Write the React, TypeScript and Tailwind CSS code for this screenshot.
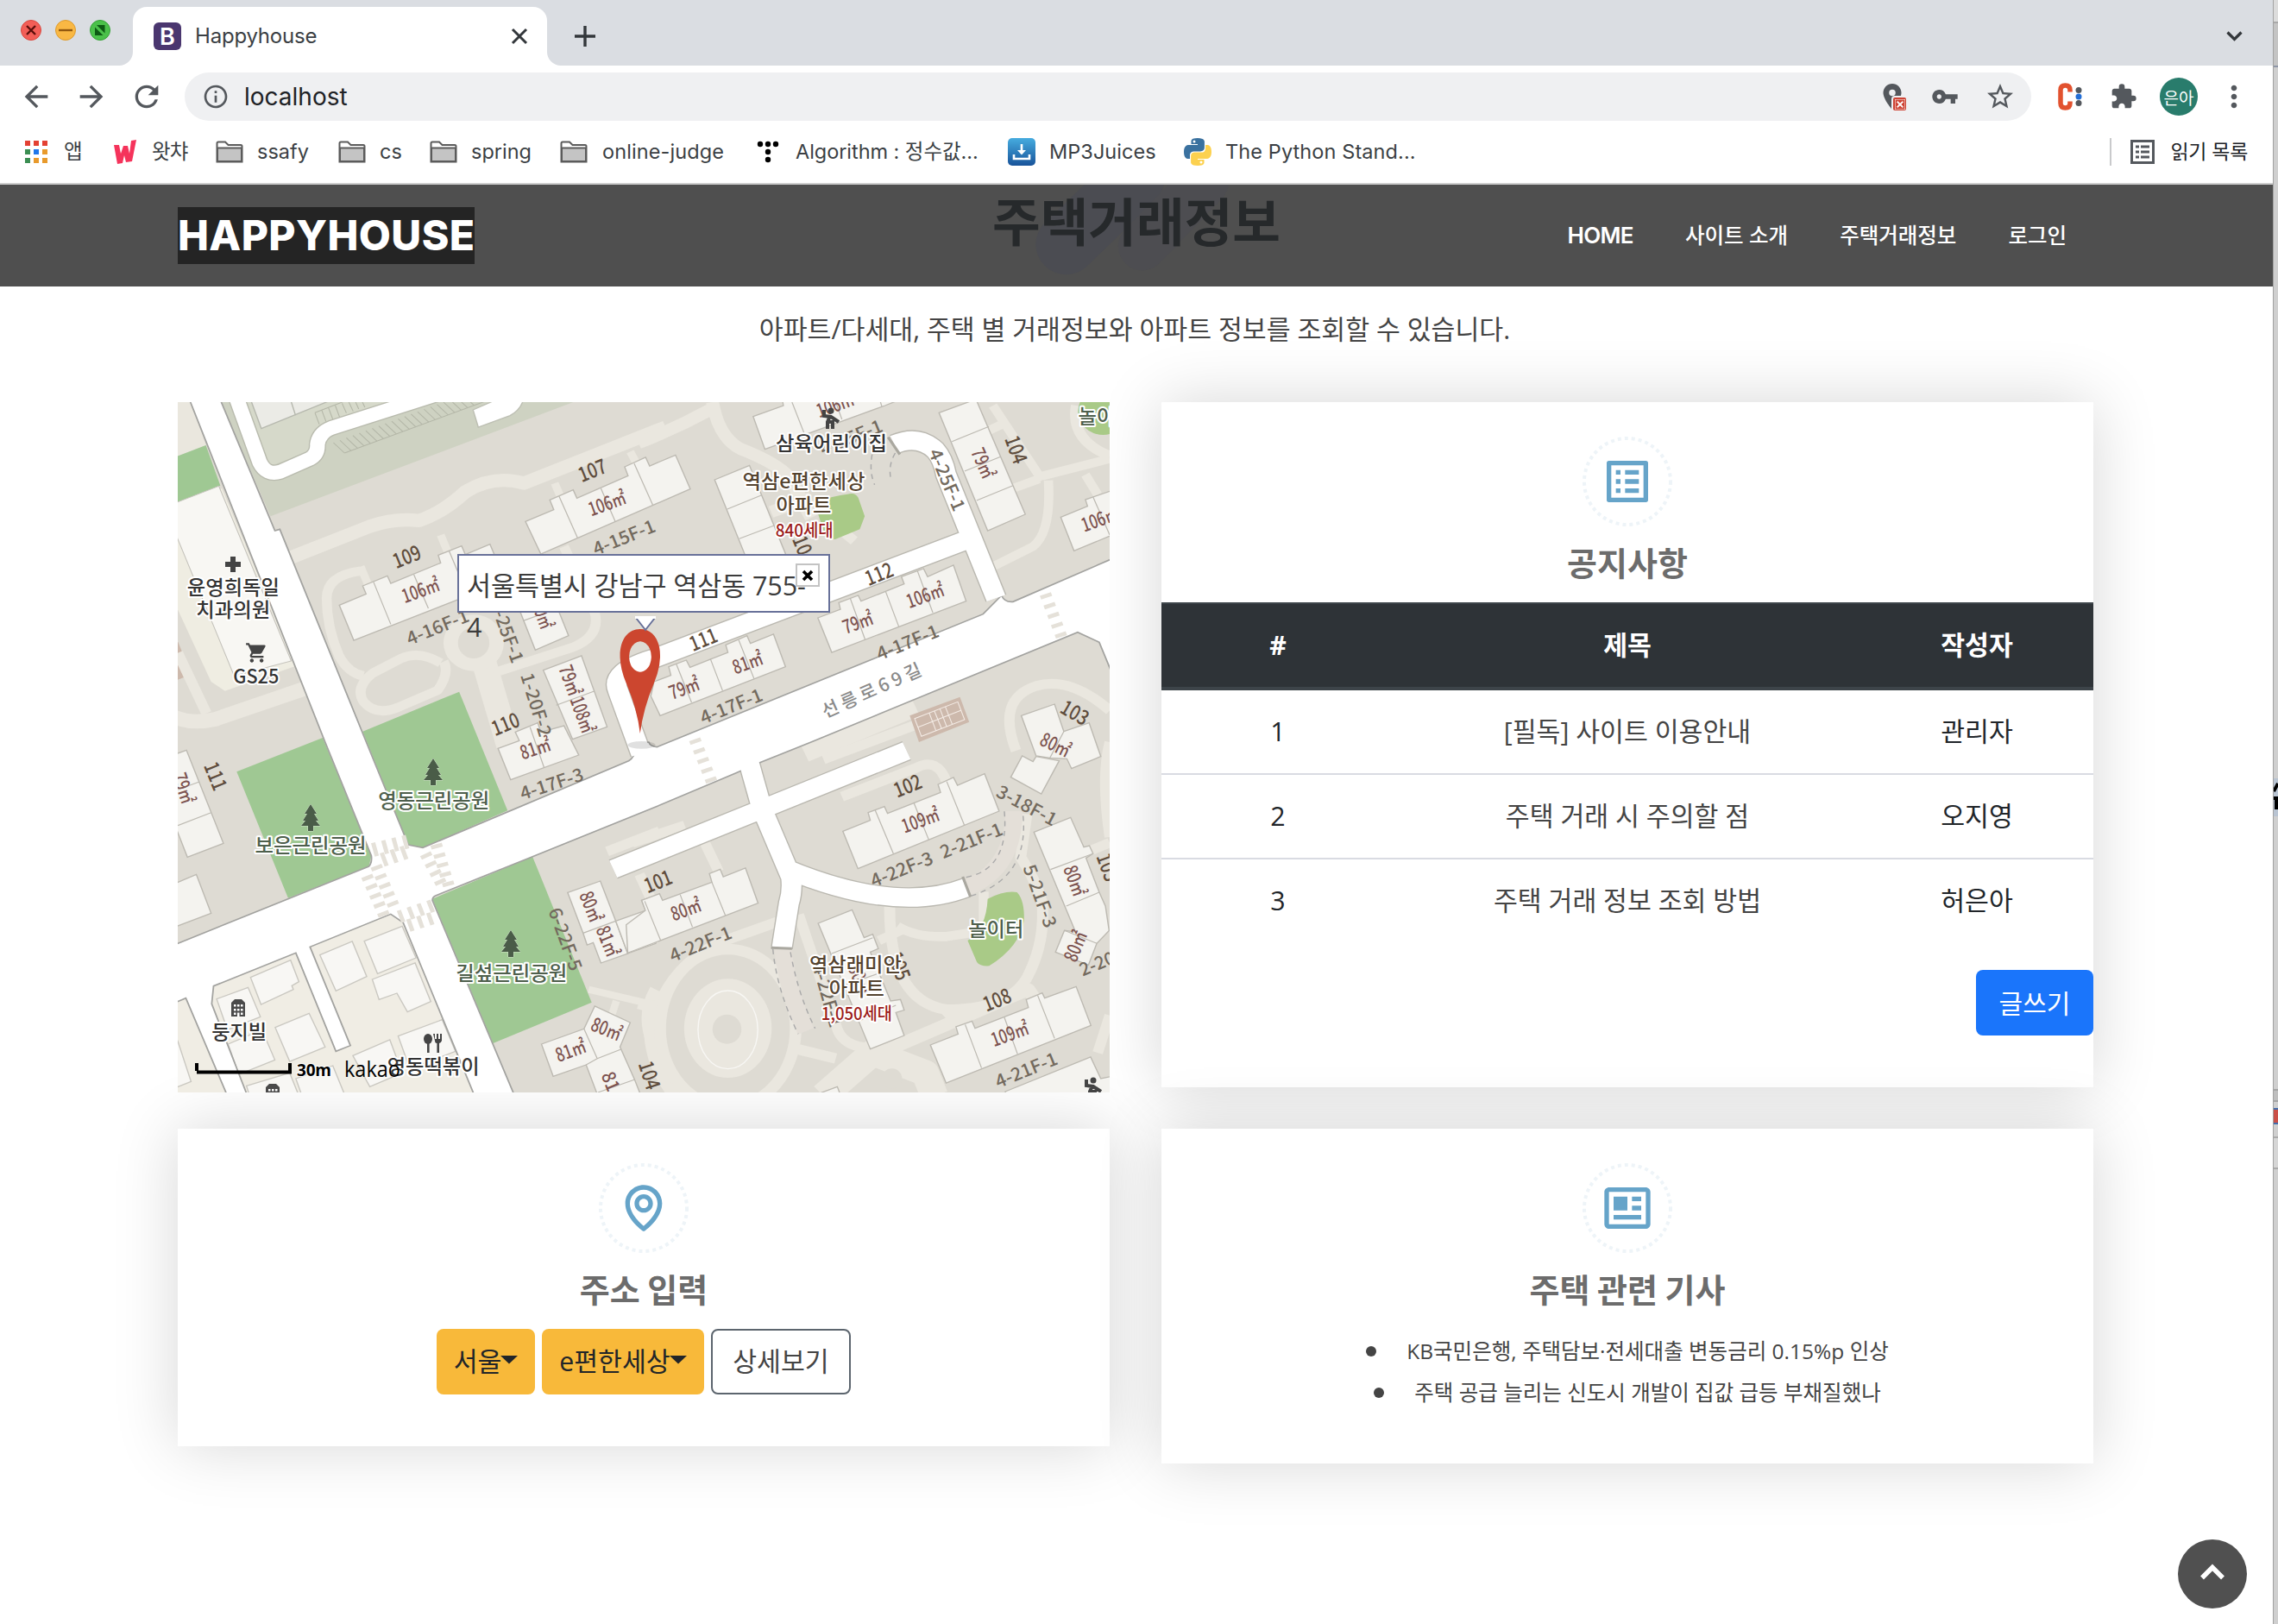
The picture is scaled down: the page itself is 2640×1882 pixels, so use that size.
import React from "react";
import {
  MdArrowBack,
  MdArrowForward,
  MdRefresh,
  MdInfoOutline,
  MdVpnKey,
  MdStarBorder,
  MdExtension,
  MdMoreVert,
  MdLocationOn,
  MdShoppingCart,
  MdClose,
} from "react-icons/md";
import { BiMap, BiNews } from "react-icons/bi";

/* ---------- Browser chrome ---------- */

function TrafficLights() {
  return (
    <svg className="absolute left-6 top-[23px]" width="104" height="24" viewBox="0 0 104 24">
      <circle cx="12" cy="12" r="11.5" fill="#f25e57" stroke="#d9483f" />
      <path d="M7 7l10 10M17 7L7 17" stroke="#5c0f0b" strokeWidth="2.4" />
      <circle cx="52" cy="12" r="11.5" fill="#f9b844" stroke="#dc9b2f" />
      <path d="M44 12h16" stroke="#93590f" strokeWidth="2.4" />
      <circle cx="92" cy="12" r="11.5" fill="#4bc14a" stroke="#36a137" />
      <path d="M88 6h9.500v9.500zM86 8.500v9.500h9.500z" fill="#0d5a14" />
    </svg>
  );
}

function TabStrip() {
  return (
    <div className="relative flex h-[76px] shrink-0 bg-[#dadde2]">
      <TrafficLights />
      <div className="relative ml-[154px] mt-2 flex h-[68px] w-[480px] items-center rounded-t-2xl bg-white pl-6 pr-[22px]">
        <svg className="absolute -left-4 bottom-0" width="16" height="16"><path d="M16 0V16H0A16 16 0 0 0 16 0" fill="#fff" /></svg>
        <svg className="absolute -right-4 bottom-0" width="16" height="16"><path d="M0 0V16H16A16 16 0 0 1 0 0" fill="#fff" /></svg>
        <span className="flex size-8 items-center justify-center rounded-md bg-[#4a366f] font-['Inter'] text-[27px] font-semibold leading-none text-white">B</span>
        <span className="ml-4 flex-1 font-['Inter'] text-2xl leading-none tracking-[-0.2px] text-[#3b3f44]">Happyhouse</span>
        <svg width="20" height="20" viewBox="0 0 20 20"><path d="M2 2l16 16M18 2L2 18" stroke="#33373b" strokeWidth="3" /></svg>
      </div>
      <svg className="ml-8 mt-[30px]" width="24" height="24"><path d="M12 0v24M0 12h24" stroke="#33373b" strokeWidth="3.4" /></svg>
      <svg className="ml-auto mr-[35px] mt-9" width="19" height="13"><path d="M1.500 1.500l8 8 8-8" fill="none" stroke="#33373b" strokeWidth="3.200" /></svg>
    </div>
  );
}

function Toolbar() {
  return (
    <div className="flex h-[72px] shrink-0 items-center bg-white pl-[22px] text-[#54585d]">
      <MdArrowBack className="size-10" />
      <MdArrowForward className="ml-6 size-10" />
      <MdRefresh className="ml-6 size-10" />
      <div className="ml-6 flex h-14 w-[2140px] items-center rounded-full bg-[#eff0f2] pl-5">
        <MdInfoOutline className="size-8" />
        <span className="ml-[17px] flex-1 font-['Inter'] text-[28px] leading-none text-[#202226]">localhost</span>
        <span className="relative mr-[27px] flex">
          <MdLocationOn className="size-9" />
          <span className="absolute left-[19px] top-[19px] flex size-[15px] items-center justify-center rounded-[2px] bg-[#ce4435] text-white ring-2 ring-[#eff0f2]">
            <MdClose className="size-3 stroke-white stroke-2" />
          </span>
        </span>
        <MdVpnKey className="mr-[30px] size-8" />
        <MdStarBorder className="mr-[18px] size-9" />
      </div>
      <svg className="ml-[30px]" width="30" height="32" viewBox="0 0 30 32">
        <path d="M15 10.500V8.500Q15 3 9.500 3T4 8.500V23.500Q4 29 9.500 29T15 23.500V21.500" fill="none" stroke="#e2522f" strokeWidth="5.500" />
        <circle cx="25" cy="8.500" r="3.500" fill="#54585d" />
        <circle cx="25" cy="16" r="3.500" fill="#246fd6" />
        <circle cx="25" cy="23.500" r="3.500" fill="#54585d" />
      </svg>
      <MdExtension className="ml-[31px] size-8" />
      <span className="ml-[26px] flex size-11 items-center justify-center rounded-full bg-[#297c6c] font-['Noto_Sans_CJK_KR'] text-[19px] leading-none text-white">은아</span>
      <MdMoreVert className="ml-[22px] size-10" />
    </div>
  );
}

const folder = (
  <svg width="32" height="26" viewBox="0 0 32 26">
    <path d="M1.500 24.500V3Q1.500 1.500 3 1.500h8l3.500 3.500H29q1.500 0 1.500 1.500v18z" fill="#fff" stroke="#5b5b5b" strokeWidth="2" />
    <path d="M2 8.500h28V24H2z" fill="#c4c4c4" stroke="#5b5b5b" strokeWidth="2" />
  </svg>
);

const appsIcon = (
  <svg width="26" height="26" viewBox="0 0 26 26">
    <path d="M0 0h6v6H0zM10 0h6v6h-6zM20 0h6v6h-6z" fill="#e34133" />
    <path d="M0 10h6v6H0zM0 20h6v6H0z" fill="#3b8e52" />
    <path d="M10 10h6v6h-6z" fill="#1f77ea" />
    <path d="M20 10h6v6h-6zM10 20h6v6h-6zM20 20h6v6h-6z" fill="#e89a2c" />
  </svg>
);

const watchaIcon = (
  <svg width="26" height="28" viewBox="0 0 26 28">
    <path d="M0 6H6L8 16L11 7H16L18 16L20 1L26 0L21 25L14 26L12 18L10 27L4 28Z" fill="#f5335b" />
  </svg>
);

const dotsIcon = (
  <svg width="26" height="26" viewBox="0 0 26 26">
    {[[4, 4], [13, 4], [22, 4], [13, 13], [13, 22]].map(([x, y]) => (
      <circle key={`${x}-${y}`} cx={x} cy={y} r="3.200" />
    ))}
  </svg>
);

const mp3Icon = (
  <svg width="32" height="32" viewBox="0 0 32 32">
    <defs>
      <linearGradient id="mp3" x1="0" y1="0" x2="0" y2="1">
        <stop offset="0" stopColor="#46acdf" />
        <stop offset="1" stopColor="#18539a" />
      </linearGradient>
    </defs>
    <rect width="32" height="32" rx="5" fill="url(#mp3)" />
    <path d="M16 7v10M7 19v5h18v-5" fill="none" stroke="#fff" strokeWidth="2.600" />
    <path d="M11 14h10l-5 5.500z" fill="#fff" />
  </svg>
);

const pythonIcon = (
  <svg width="32" height="32" viewBox="0 0 32 32">
    <path d="M15.900 0C8 0 8.500 3.500 8.500 3.500V7H16v1H5.300S0 7.500 0 16s4.600 8 4.600 8H7v-4s-.2-4.600 4.500-4.600h8s4.400 0 4.400-4.300V4.300S24.600 0 15.900 0z" fill="#3a719f" />
    <path d="M16.100 32c7.900 0 7.400-3.500 7.400-3.500V25H16v-1h10.700s5.300.5 5.300-8-4.600-8-4.600-8H25v4s.2 4.600-4.500 4.600h-8s-4.400 0-4.400 4.300v6.800S7.400 32 16.100 32z" fill="#fcd14f" />
    <circle cx="12" cy="4" r="1.500" fill="#fff" />
    <circle cx="20" cy="28" r="1.500" fill="#fff" />
  </svg>
);

const bookmarks: { icon: React.ReactNode; label: string; cell: string; gap: string; text: string }[] = [
  { icon: appsIcon, label: "앱", cell: "w-[103px]", gap: "ml-[19px]", text: "tracking-[-1px]" },
  { icon: watchaIcon, label: "왓챠", cell: "w-[118px]", gap: "ml-[18px]", text: "tracking-[-0.8px]" },
  { icon: folder, label: "ssafy", cell: "w-[142px]", gap: "ml-4", text: "" },
  { icon: folder, label: "cs", cell: "w-[106px]", gap: "ml-4", text: "" },
  { icon: folder, label: "spring", cell: "w-[151px]", gap: "ml-4", text: "" },
  { icon: folder, label: "online-judge", cell: "w-[228px]", gap: "ml-[17px]", text: "tracking-[0.1px]" },
  { icon: dotsIcon, label: "Algorithm : 정수값...", cell: "w-[291px]", gap: "ml-[19px]", text: "tracking-[-0.05px]" },
  { icon: mp3Icon, label: "MP3Juices", cell: "w-[204px]", gap: "ml-4", text: "tracking-[0.05px]" },
  { icon: pythonIcon, label: "The Python Stand...", cell: "w-[300px]", gap: "ml-4", text: "tracking-[0.1px]" },
];

function BookmarkBar() {
  return (
    <div className="flex h-[66px] shrink-0 items-start border-b-2 border-[#cfcfcf] bg-white pl-[29px] font-['Inter','Noto_Sans_CJK_KR'] text-[23.500px] leading-none text-[#3b3f44]">
      {bookmarks.map((b) => (
        <div key={b.label} className={`flex h-[56px] shrink-0 items-center whitespace-nowrap ${b.cell}`}>
          {b.icon}
          <span className={`${b.gap} ${b.text}`}>{b.label}</span>
        </div>
      ))}
      <div className="ml-auto mr-[29px] flex h-[56px] items-center whitespace-nowrap text-[#202226]">
        <span className="h-8 w-0.5 bg-[#c9cacc]" />
        <svg className="ml-[22px]" width="28" height="28" viewBox="0 0 28 28">
          <rect x="1.500" y="1.500" width="25" height="25" fill="none" stroke="#54585d" strokeWidth="3" />
          <path d="M6 8h4M6 14h4M6 20h4M12 8h10M12 14h10M12 20h10" stroke="#54585d" strokeWidth="2.800" />
        </svg>
        <span className="ml-[18px] text-[23px] tracking-[-0.3px]">읽기 목록</span>
      </div>
    </div>
  );
}

/* ---------- Map ---------- */

type Pts = string;
type Tile = { x: number; y: number; buildings: Pts[]; dividers: string; houses?: Pts[]; paths: [string, number][] };

const tiles: Tile[] = [
  {
    x: 0,
    y: 0,
    buildings: [
      "541,724 628,685 617,657 697,622 708,648 870,577 862,550 938,518 950,548 1030,512 1080,640 588,846",
      "1145,433 1237,392 1224,358 1300,323 1312,352 1478,274 1467,243 1535,210 1548,240 1632,202 1680,320 1195,546",
      "1115,712 1225,670 1285,830 1177,880",
      "1203,950 1327,900 1410,1147 1298,1190",
      "1056,1222 1125,1195 1112,1165 1185,1133 1195,1165 1270,1143 1318,1245 1097,1331",
    ],
    dividers:
      "M652,643L708,790M783,618L830,735M897,535L950,670M1254,345L1314,490M1390,318L1436,432M1498,232L1558,375M1138,778L1250,735M1245,1072L1368,1023M1160,1148L1206,1290",
    paths: [
      ["M380,560L640,450Q720,420 800,430Q880,400 950,330Q1040,270 1140,300L1600,105", 46],
      ["M610,605Q500,620 500,700Q500,800 540,900Q570,960 620,970", 32],
      ["M870,480L905,570M610,590L645,680M1240,300L1260,350M1485,190L1510,240", 26],
      ["M870,925Q800,880 740,910L650,960Q590,1010 620,1060Q660,1110 730,1080L860,1020Q900,960 880,920", 32],
      ["M1010,920L1090,1210", 80],
      ["M1040,960L1300,870Q1390,830 1370,750L1270,520", 32],
      ["M0,1110Q60,1140 140,1120L440,1010", 50],
      ["M17,890L110,1100", 34],
    ],
  },
  {
    x: 1512,
    y: 0,
    buildings: [
      "372,68 470,30 465,0 870,0 800,30 410,182",
      "247,288 360,238 478,548 345,548",
      "975,55 1095,8 1255,408 1133,465",
      "1370,418 1457,380 1450,357 1529,328 1560,315 1560,470 1413,535",
      "582,768 655,738 650,715 713,690 722,710 862,650 853,625 925,597 938,625 1022,585 1063,710 627,888",
      "50,990 105,968 98,938 155,915 167,940 290,888 283,862 352,830 363,857 438,825 477,938 70,1108 40,1040",
      "1242,1108 1350,1068 1380,1163 1462,1133 1500,1250 1405,1292 1390,1258 1335,1255 1290,1248",
    ],
    dividers:
      "M498,18L537,125M640,18L660,78M780,0L790,35M288,390L398,342M327,493L440,447M1017,155L1137,103M1058,258L1175,208M1097,360L1215,308M1475,348L1529,480M687,700L735,843M802,677L845,800M905,605L955,750M123,930L172,1062M233,910L273,1022M325,845L375,980M1380,1163L1335,1255",
    paths: [
      ["M0,160Q120,110 240,40M240,18Q260,140 330,180Q450,230 490,280L560,420M430,400L560,350", 42],
      ["M1150,30L1310,290M1310,275L1529,215M1330,290Q1340,470 1280,520L1150,590M1210,320L1300,285M1130,120L1190,90M1450,270L1490,340", 30],
      ["M1420,30Q1400,150 1529,205", 34],
      ["M1225,1230Q1160,1050 1290,1005Q1400,970 1529,1090M620,430L700,500", 34],
      ["M540,1240L900,1080", 60],
    ],
  },
  {
    x: 0,
    y: 1200,
    buildings: [
      "1282,523 1388,483 1438,622 1477,735 1390,768 1365,697 1345,705 1332,664",
      "1438,622 1535,585 1522,550 1568,533 1568,700 1477,735",
      "-10,50 45,28 165,352 48,400 -10,240",
      "-10,500 77,460 125,595 -10,650",
      "1197,1050 1335,997 1370,918 1485,975 1452,1060 1500,1175 1520,1230 1380,1230 1342,1122 1235,1162",
    ],
    dividers:
      "M1332,664L1438,622M17,165L87,138M17,290L125,245M1335,997L1378,1100L1455,1068M1342,1122L1378,1100M1380,1218L1500,1173",
    houses: [
      "253,818 383,758 410,833 387,847 392,860 287,912",
      "478,740 583,693 630,815 530,865",
      "622,692 745,640 790,750 665,805",
      "648,825 787,768 838,902 762,938 728,873 670,895",
      "143,893 245,853 285,955 178,1000",
      "333,992 443,943 495,1060 380,1110",
      "180,1050 290,1000 332,1105 215,1155",
      "585,1090 705,1035 745,1150 640,1198",
      "732,1022 875,965 918,1075 770,1135",
      "240,1195 380,1150 410,1230 250,1230",
      "400,1170 520,1125 560,1230 420,1230",
      "-10,980 17,1040 60,1180 -10,1210",
    ],
    paths: [
      ["M1350,860L1568,915M1440,900L1425,950", 24],
      ["M1560,1050Q1520,950 1568,860", 40],
      ["M1410,380L1580,310M1515,460L1550,540", 34],
    ],
  },
  {
    x: 1512,
    y: 1200,
    buildings: [
      "-40,635 22,585 10,550 68,527 78,550 238,487 230,457 265,442 275,468 347,438 388,560 -35,733",
      "1208,122 1245,48 1280,68 1290,50 1365,65 1307,180",
      "663,310 752,272 745,245 798,224 808,248 980,175 972,147 1022,123 1035,150 1123,110 1170,240 712,440",
      "1283,313 1402,262 1445,365 1463,360 1475,388 1452,403 1495,522 1515,570 1527,655 1487,700 1460,775 1353,730 1382,655 1418,660",
      "583,630 693,583 732,680 760,668 778,718 752,730 818,900 850,895 862,932 835,940 862,1020 752,1067",
      "947,1053 1037,1015 1030,990 1082,970 1092,995 1265,923 1258,895 1310,872 1318,890 1420,850 1468,985 998,1185",
      "1190,1215 1467,1095 1500,1170 1545,1160 1545,1240 1200,1240",
      "540,1240 645,1198 660,1240",
    ],
    dividers:
      "M20,553L72,690M135,530L175,643M238,487L282,603M768,237L827,388M893,210L942,340M1000,137L1057,288M1337,443L1475,388M1388,570L1495,522M1382,655L1487,700M627,735L760,680M670,845L790,800M715,970L835,915M1060,982L1113,1133M1187,957L1230,1085M1295,880L1350,1030",
    paths: [
      ["M60,930Q120,760 280,690L450,625M0,910L130,950M430,1045L640,1100", 36],
      ["M50,900Q10,1080 120,1230", 44],
      ["M520,600L640,980Q660,1080 800,1060", 34],
      ["M815,560Q810,900 1000,930Q1200,930 1260,820Q1320,700 1310,560Q1290,480 1240,400L1260,250", 36],
      ["M840,640Q900,680 1000,676L1120,656L1120,520M780,690L860,650", 32],
      ["M700,1120L1265,860L1290,900M1000,930L1070,1010", 44],
      ["M1529,0Q1500,120 1529,330M1460,380L1529,350M1529,950L1490,1080", 34],
      ["M600,60L900,-60M660,190L900,90Q970,50 1000,140M215,350L260,450M-20,350L150,290", 34],
      ["M600,1230L760,1080L930,1150L960,1230", 90],
    ],
  },
];

const roadArea =
  "M55,10L495,1200L645,1595Q648,1620 637,1632L5,1905L5,2107L43,2090L178,2430L243,2430L127,2110L133,2048L400,1933L530,2275L577,2255L446,1912L708,1798L748,1827L980,2430L1110,2430L843,1750Q843,1738 855,1733L1168,1598L1568,1425L1827,1308L1897,1275L2072,1200L2937,818L3007,853L3050,965L3050,562L2727,712Q2700,715 2690,690L2630,755L1572,1217Q1550,1215 1545,1200L1500,1210Q1505,1250 1480,1265L812,1567L765,1557L640,1230L348,460L332,465L155,10Z";

const lanes =
  "M2342,165Q2420,130 2475,185Q2500,215 2510,270L2672,700M2570,500L1560,910Q1420,955 1445,1020L1520,1240M1430,1642L2382,1230M1870,1270L1912,1430L2007,1670Q2012,1720 2000,1760L1977,1915M1990,1640Q2350,1800 2577,1705";

const curvedDrive =
  "M208,5L283,228Q305,275 350,260L445,215Q472,200 470,165Q475,125 515,108L860,-10";

const halo = "[paint-order:stroke] stroke-white stroke-[4px] [stroke-linejoin:round]";

type Label = [text: string, x: number, y: number, rotate: number, size: number, fill: string, width?: number];

const numberColor = "#5f4d3d";
const areaColor = "#7d5350";
const floorColor = "#736a5e";

const labels: Label[] = [
  ["107", 1362, 255, -22, 24, numberColor, 33],
  ["109", 760, 555, -22, 24, numberColor, 33],
  ["110", 1080, 1137, -22, 24, numberColor, 33],
  ["111", 1722, 843, -22, 24, numberColor, 33],
  ["112", 2292, 615, -22, 24, numberColor, 33],
  ["104", 2738, 183, 70, 24, numberColor, 33],
  ["10", 2044, 515, 68, 24, numberColor, 22],
  ["103", 2928, 1097, 30, 24, numberColor, 33],
  ["111", 140, 1318, 68, 24, numberColor, 33],
  ["101", 1575, 1684, -22, 24, numberColor, 33],
  ["102", 2385, 1352, -22, 24, numberColor, 33],
  ["108", 2675, 2096, -22, 24, numberColor, 33],
  ["104", 1548, 2358, 72, 24, numberColor, 33],
  ["105", 2358, 1978, 70, 24, numberColor, 33],
  ["103", 3035, 1635, 70, 24, numberColor, 33],
  ["106㎡", 1410, 370, -20, 22, areaColor, 45],
  ["106㎡", 805, 672, -20, 22, areaColor, 45],
  ["106㎡", 2150, 28, -20, 22, areaColor, 45],
  ["79㎡", 2630, 230, 66, 22, areaColor, 36],
  ["106㎡", 3010, 425, -20, 22, areaColor, 45],
  ["106㎡", 2442, 690, -20, 22, areaColor, 45],
  ["79㎡", 2224, 784, -20, 22, areaColor, 36],
  ["81㎡", 1866, 924, -20, 22, areaColor, 36],
  ["79㎡", 1660, 1012, -20, 22, areaColor, 36],
  ["79㎡", 1290, 985, 70, 22, areaColor, 36],
  ["108㎡", 1330, 1105, 70, 22, areaColor, 43],
  ["0㎡", 1205, 770, 70, 22, areaColor, 24],
  ["81㎡", 1177, 1222, -18, 22, areaColor, 36],
  ["80㎡", 2865, 1210, 26, 22, areaColor, 36],
  ["79㎡", 36, 1360, 72, 22, areaColor, 36],
  ["80㎡", 1358, 1772, 68, 22, areaColor, 36],
  ["81㎡", 1412, 1892, 68, 22, areaColor, 36],
  ["80㎡", 1666, 1782, -20, 22, areaColor, 36],
  ["109㎡", 2427, 1472, -20, 22, areaColor, 45],
  ["80㎡", 2928, 1682, 70, 22, areaColor, 36],
  ["80㎡", 2930, 1910, -68, 22, areaColor, 36],
  ["80㎡", 1408, 2198, 22, 22, areaColor, 36],
  ["81㎡", 1292, 2272, -20, 22, areaColor, 36],
  ["81", 1422, 2380, 68, 22, areaColor, 22],
  ["109㎡", 2717, 2214, -20, 22, areaColor, 45],
  ["80㎡", 2230, 2025, 68, 22, areaColor, 36],
  ["4-15F-1", 1465, 488, -22, 21, floorColor, 76],
  ["4-16F-1", 860, 800, -22, 21, floorColor, 76],
  ["1-25F-1", 1085, 815, 70, 21, floorColor, 76],
  ["1-20F-2", 1180, 1070, 73, 21, floorColor, 76],
  ["4-15F-1", 2202, 140, -22, 21, floorColor, 76],
  ["4-25F-1", 2513, 288, 67, 21, floorColor, 76],
  ["4-17F-1", 2385, 853, -22, 21, floorColor, 76],
  ["4-17F-1", 1813, 1075, -22, 21, floorColor, 76],
  ["4-17F-3", 1230, 1345, -18, 21, floorColor, 76],
  ["6-22F-5", 1275, 1885, 70, 21, floorColor, 76],
  ["4-22F-1", 1713, 1902, -22, 21, floorColor, 76],
  ["4-22F-3", 2366, 1642, -22, 21, floorColor, 76],
  ["2-21F-1", 2592, 1542, -22, 21, floorColor, 76],
  ["3-18F-1", 2772, 1420, 28, 21, floorColor, 76],
  ["5-21F-3", 2815, 1735, 70, 21, floorColor, 76],
  ["2-20", 3000, 1970, -22, 21, floorColor, 42],
  ["4-22F-1", 2125, 2080, 74, 21, floorColor, 76],
  ["4-21F-1", 2770, 2340, -22, 21, floorColor, 76],
];

const places: Label[] = [
  ["윤영희독일", 197, 663, 0, 23, "#333", 107],
  ["치과의원", 197, 740, 0, 23, "#333", 86],
  ["GS25", 271, 972, 0, 23, "#333", 53],
  ["삼육어린이집", 2138, 160, 0, 23, "#333", 129],
  ["역삼e편한세상", 2048, 293, 0, 23, "#54432f", 142],
  ["아파트", 2048, 377, 0, 23, "#54432f", 64],
  ["840세대", 2050, 465, 0, 20, "#9c1c1a", 67],
  ["놀이터", 3028, 68, 0, 23, "#4e5f4c", 64],
  ["영동근린공원", 848, 1402, 0, 23, "#4e5f4c", 129],
  ["보은근린공원", 448, 1560, 0, 23, "#4e5f4c", 129],
  ["길섶근린공원", 1100, 2002, 0, 23, "#4e5f4c", 129],
  ["둥지빌", 216, 2208, 0, 23, "#333", 64],
  ["영동떡볶이", 846, 2328, 0, 23, "#333", 107],
  ["역삼래미안", 2216, 1972, 0, 23, "#54432f", 107],
  ["아파트", 2220, 2058, 0, 23, "#54432f", 64],
  ["1,050세대", 2220, 2145, 0, 20, "#9c1c1a", 82],
  ["놀이터", 2672, 1850, 0, 23, "#4e5f4c", 64],
];

function MapLabel({ label, outlined }: { label: Label; outlined?: boolean }) {
  const [text, x, y, rotate, size, fill, width] = label;
  return (
    <text
      transform={`translate(${x / 2.8 - 6} ${y / 3 - 6}) rotate(${rotate})`}
      textAnchor="middle"
      dy="0.36em"
      fontSize={size}
      fill={fill}
      textLength={width}
      lengthAdjust="spacingAndGlyphs"
      className={outlined ? `font-medium ${halo}` : "font-medium"}
    >
      {text}
    </text>
  );
}

function Tree({ x, y }: { x: number; y: number }) {
  return (
    <path
      transform={`translate(${x} ${y})`}
      d="M11 0l7 11h-3l5 8h-3l5 6H14v6H8v-6H0l5-6H2l5-8H4z"
      fill="#4a5c48"
      stroke="#d4e6cd"
      strokeWidth="1"
      className="[paint-order:stroke]"
    />
  );
}

function ChildIcon({ x, y }: { x: number; y: number }) {
  return (
    <g transform={`translate(${x} ${y})`} fill="none" stroke="#444" strokeWidth="4">
      <circle cx="11" cy="4" r="3.500" fill="#444" stroke="none" />
      <path d="M3 3v7l8 1 9 6M10 10l-3 7v8M9 17h4v8" />
    </g>
  );
}

function BuildingIcon({ x, y }: { x: number; y: number }) {
  return (
    <g transform={`translate(${x} ${y})`}>
      <path d="M0 20V4L4 0h8l4 4v16z" fill="#4a4a4a" />
      <path d="M3 6h2.500v2.500H3zM7 6h2.500v2.500H7zM11 6h2.500v2.500H11zM3 11h2.500v2.500H3zM7 11h2.500v2.500H7zM11 11h2.500v2.500H11zM3 15.500h2.500V18H3zM11 15.500h2.500V18H11zM7 15.500h2.500V20H7z" fill="#fff" />
    </g>
  );
}

function KakaoMap() {
  const hatch = Array.from({ length: 21 }, (_, i) => `M${558 + i * 21},${195 - i * 8.3}l-36,-36`).join("");
  return (
    <div className="relative h-[800px] w-[1080px] overflow-hidden">
      <svg width="1080" height="800" viewBox="0 0 1080 800" className="font-['Noto_Sans_CJK_KR',sans-serif]">
        <rect width="1080" height="800" fill="#dedbd3" />
        <g transform="translate(-6 -6) scale(.357143 .333333)">
          <path d="M150,0L1345,0L318,415Z" fill="#ced2c2" />
          <path d="M235,0L315,240L445,190L500,100L830,0Z" fill="#d6d9ca" />
          <path d="M250,0L288,110L540,0M380,0L399,64" fill="#ebebe6" stroke="#b6b8ae" strokeWidth="4" />
          <path d={hatch} stroke="#b3b6a7" strokeWidth="3" />
          <path d="M558,195L1040,5M462,55L560,14M462,55l14,40M484,46l14,40M506,38l14,40M528,30l14,40M550,22l14,34M572,18l14,32M594,18l10,24M616,18l8,18" fill="none" stroke="#b3b6a7" strokeWidth="3" />
          <path d="M975,45L992,105L1095,65Q1130,45 1140,5L1060,5Z" fill="#fff" stroke="#bdbfb3" strokeWidth="4" />
          <path d="M0,0H55L108,168L0,212Z" fill="#eae7de" />
          <path d="M0,212L108,168L155,308L0,372Z" fill="#9fc893" />
          <path d="M0,390L160,318L400,935L170,1022L125,990L0,700Z" fill="#efede2" />
          <path d="M0,372L150,310L385,918L200,970L0,450Z" fill="#f8f7f3" stroke="#c4c2bb" strokeWidth="3" />
          <path d="M0,830L17,850L60,965L0,990Z" fill="#cdb9ac" />
          <path d="M0,2100L133,2048L708,1798L748,1827L990,2430H0Z" fill="#f0ede4" />
          {tiles.map((t) => (
            <g key={`${t.x}-${t.y}-paths`} transform={`translate(${t.x} ${t.y})`} fill="none" stroke="#eae7df">
              {t.paths.map(([d, w]) => (
                <path key={d} d={d} strokeWidth={w} strokeLinejoin="round" />
              ))}
            </g>
          ))}
          <circle cx="977" cy="855" r="98" fill="#eae7df" />
          <ellipse cx="977" cy="855" rx="51" ry="54" fill="#dedbd3" />
          <ellipse cx="1802" cy="2195" rx="220" ry="275" fill="#dedbd3" stroke="#eae7df" strokeWidth="38" />
          <ellipse cx="1802" cy="2195" rx="142" ry="172" fill="#eae7df" />
          <ellipse cx="1802" cy="2200" rx="97" ry="136" fill="none" stroke="#f8f7f4" strokeWidth="4" />
          <ellipse cx="1799" cy="2198" rx="47" ry="51" fill="#dedbd3" />
          <ellipse cx="2334" cy="2370" rx="33" ry="35" fill="#dedbd3" />
          <path d="M208,1303L487,1185L645,1595L637,1632L375,1742Z" fill="#9fc893" />
          <path d="M617,1163L930,1025L1087,1438L812,1567L765,1557Z" fill="#9fc893" />
          <path d="M843,1745L1168,1598L1360,2105L1040,2247Z" fill="#9fc893" />
          <path d="M2085,375Q2110,350 2190,338Q2215,330 2225,350L2246,415L2230,460L2150,495L2120,490Z" fill="#a9ca87" />
          <circle cx="3020" cy="50" r="82" fill="#a9ca87" />
          <path d="M2645,1745Q2700,1715 2740,1722Q2765,1750 2763,1820Q2750,1910 2650,1978Q2620,1980 2610,1965L2580,1890Q2640,1850 2645,1745Z" fill="#a9ca87" />
          <path d="M2392,1108L2555,1043L2585,1130L2422,1200Z" fill="#cdb9ac" />
          <path d="M2408,1118L2548,1060L2570,1122L2430,1180ZM2419,1148L2558,1090M2455,1098L2477,1160M2472,1092L2495,1152M2490,1084L2512,1146M2508,1078L2530,1138" fill="none" stroke="#f4ece6" strokeWidth="3" />
          {tiles.map((t) => (
            <g key={`${t.x}-${t.y}-buildings`} transform={`translate(${t.x} ${t.y})`} stroke="#bdbab2" strokeWidth="4">
              {t.houses?.map((p) => <polygon key={p} points={p} fill="#f8f7f4" stroke="#cac8c1" />)}
              {t.buildings.map((p) => <polygon key={p} points={p} fill="#f4f3ef" />)}
              <path d={t.dividers} fill="none" strokeWidth="3.500" />
            </g>
          ))}
          <path d={curvedDrive} fill="none" stroke="#b9bbae" strokeWidth="56" />
          <path d={curvedDrive} fill="none" stroke="#fff" strokeWidth="48" />
          <path d="M1980,1920Q2000,2080 2055,2205M2580,1705Q2730,1640 2730,1440" fill="none" stroke="#e4dfd8" strokeWidth="56" />
          <path
            d="M1948,1920Q1960,2060 2030,2215M2005,1930Q2030,2080 2085,2195M2590,1735Q2790,1670 2757,1430M2575,1670Q2720,1640 2698,1430M2270,200Q2260,260 2278,305M2345,195Q2320,240 2332,290"
            fill="none"
            stroke="#a9a9a9"
            strokeWidth="4"
            strokeDasharray="18 16"
          />
          <path d={lanes} fill="none" stroke="#bab8b0" strokeWidth="72" />
          <path d={roadArea} fill="#fff" stroke="#a3a3a0" strokeWidth="5" />
          <path d={lanes} fill="none" stroke="#fff" strokeWidth="64" />
          <path d="M1942,1915L2010,1918M2564,1668L2589,1738M2322,140L2360,200" stroke="#aaa8a0" strokeWidth="9" />
          <g stroke="#e5e1d9" fill="none">
            <path d="M2832,685L2885,835" strokeWidth="38" strokeDasharray="14 22" />
            <path d="M1694,1190L1750,1340" strokeWidth="38" strokeDasharray="14 22" />
            <path d="M820,1588L878,1705" strokeWidth="38" strokeDasharray="14 20" />
            <path d="M855,1555L898,1705" strokeWidth="38" strokeDasharray="14 20" />
            <path d="M630,1665L690,1812" strokeWidth="38" strokeDasharray="14 20" />
            <path d="M660,1630L722,1780" strokeWidth="38" strokeDasharray="14 20" />
            <path d="M650,1575L765,1545" strokeWidth="48" strokeDasharray="14 20" />
            <path d="M680,1610L765,1580" strokeWidth="48" strokeDasharray="14 20" />
            <path d="M735,1808L845,1768" strokeWidth="44" strokeDasharray="14 20" />
            <path d="M765,1838L850,1810" strokeWidth="44" strokeDasharray="14 20" />
          </g>
        </g>
        {labels.map((l, i) => <MapLabel key={i} label={l} />)}
        <text transform="translate(804 334) rotate(-24)" textAnchor="middle" dy="0.36em" fontSize="21" textLength="124" fill="#8a8a8a" className="font-medium">선릉로69길</text>
        <Tree x={285} y={413} />
        <Tree x={143} y={466} />
        <Tree x={375} y={612} />
        <path d="M55 188h18M64 179v18" stroke="#444" strokeWidth="6" />
        <MdShoppingCart x={78} y={277} size={27} color="#444" />
        <ChildIcon x={746} y={6} />
        <ChildIcon x={1050} y={782} />
        <BuildingIcon x={62} y={692} />
        <BuildingIcon x={102} y={790} />
        <g fill="#444">
          <ellipse cx="290" cy="738" rx="5" ry="6" />
          <path d="M289 742h2.600v12H289zM296 732h2v6h2v-6h2v6h2v-6h2v8q-1 3-3 3v11h-2.600v-11q-2.400 0-2.400-3z" />
        </g>
        {places.map((l, i) => <MapLabel key={i} label={l} outlined />)}
        <g transform="translate(-6 -6) scale(.357143 .333333)">
          <ellipse cx="1522" cy="1210" rx="45" ry="13" fill="#000" opacity=".12" />
          <path
            fillRule="evenodd"
            d="M1517,1170Q1508,1085 1472,995Q1452,945 1452,900C1452,840 1480,807 1517,807C1555,807 1582,840 1582,900Q1582,945 1562,995Q1527,1085 1517,1170ZM1517,850A36,53 0 1 0 1518,850Z"
            fill="#cc462f"
          />
        </g>
        <path d="M22 765v9M22 775.500h110M130 765v9" transform="translate(0 1)" stroke="#000" strokeWidth="4" fill="none" />
        <text x="138" y="781" fontSize="19" fontWeight="700" textLength="40" className="font-['Open_Sans'] [paint-order:stroke] stroke-white stroke-[2px]">30m</text>
        <text x="193" y="782" fontSize="25" textLength="65" lengthAdjust="spacingAndGlyphs" className="font-['Open_Sans'] font-medium">kakao</text>
      </svg>
      <div className="absolute left-[324px] top-[176px] h-[68px] w-[432px] border-2 border-[#687199] bg-white">
        <div className="w-[412px] pl-[9px] pt-[10px] font-['Open_Sans','Noto_Sans_CJK_KR'] text-[30.500px] leading-[48px] tracking-[-0.1px] text-[#3c3c3c]">
          <span className="whitespace-nowrap">서울특별시 강남구 역삼동 755-</span>
          <br />4
        </div>
        <button className="absolute right-[10px] top-[9px] flex h-[27px] w-[28px] items-center justify-center border-2 border-[#c3c3c3] bg-white">
          <svg width="14" height="14" viewBox="0 0 14 14"><path d="M2 2l10 10M12 2L2 12" stroke="#000" strokeWidth="3.600" /></svg>
        </button>
        <svg className="absolute left-[204px] top-[66px]" width="24" height="22" viewBox="0 0 24 22">
          <path d="M1 6L12 20L23 6" fill="#fff" stroke="#687199" strokeWidth="2" />
          <path d="M0 4h24v3H0z" fill="#fff" />
        </svg>
      </div>
    </div>
  );
}

/* ---------- Page sections ---------- */

function SiteHeader() {
  return (
    <header className="relative flex h-[118px] shrink-0 items-center overflow-hidden bg-[#4f4f4f] pl-[206px] pr-[239px]">
      <span className="absolute left-[1185px] top-[-4px] h-[70px] w-[180px] -rotate-[44deg] rounded-full bg-[#4b4c52]" />
      <span className="absolute left-[1280px] top-[6px] h-[56px] w-[160px] -rotate-[46deg] rounded-full bg-[#4d4d51]" />
      <h2 className="absolute inset-x-0 -top-1 h-[88px] text-center font-['Noto_Sans_CJK_KR'] text-[60.500px] font-bold leading-[88px] text-[#26292b]">주택거래정보</h2>
      <h1 className="relative flex h-[66px] w-[344px] items-center bg-[#242424] font-['Inter'] text-5xl font-extrabold leading-none tracking-[0.4px] text-white">HAPPYHOUSE</h1>
      <nav className="relative ml-auto flex items-center gap-[60px] font-['Inter','Noto_Sans_CJK_KR'] text-[24.500px] font-medium leading-none text-white">
        <a className="text-[26px] font-semibold tracking-[-0.7px]">HOME</a>
        <a>사이트 소개</a>
        <a>주택거래정보</a>
        <a>로그인</a>
      </nav>
    </header>
  );
}

function CardHead({ icon, title }: { icon: React.ReactNode; title: string }) {
  return (
    <>
      <div className="relative mx-auto flex size-[104px] items-center justify-center text-[#66a4c9]">
        <svg className="absolute inset-0" width="104" height="104">
          <circle cx="52" cy="52" r="50" fill="none" stroke="#eef4f8" strokeWidth="4" strokeDasharray="4 4" />
        </svg>
        {icon}
      </div>
      <h3 className="mt-[18px] text-center font-['Noto_Sans_CJK_KR'] text-[38px] font-bold leading-[46px] text-[#6c6c6c]">{title}</h3>
    </>
  );
}

const cardClass = "bg-white pt-10 shadow-[0_0_70px_rgba(0,0,0,0.16)]";

const notices = [
  { id: 1, title: "[필독] 사이트 이용안내", author: "관리자" },
  { id: 2, title: "주택 거래 시 주의할 점", author: "오지영" },
  { id: 3, title: "주택 거래 정보 조회 방법", author: "허은아" },
];

function NoticeCard() {
  return (
    <section className={`flex h-[794px] flex-col ${cardClass}`}>
      <CardHead
        title="공지사항"
        icon={
          <svg width="64" height="64" viewBox="0 0 24 24" fill="currentColor">
            <path d="M4 3h16a1 1 0 0 1 1 1v16a1 1 0 0 1-1 1H4a1 1 0 0 1-1-1V4a1 1 0 0 1 1-1zm1 2v14h14V5H5z" />
            <path d="M7 7h2v2H7zM7 11h2v2H7zM7 15h2v2H7zM11 7h6v2h-6zM11 11h6v2h-6zM11 15h6v2h-6z" />
          </svg>
        }
      />
      <div className="mt-6 font-['Open_Sans','Noto_Sans_CJK_KR'] text-[30.300px] leading-none">
        <div className="grid h-[102px] grid-cols-4 items-center border-b-4 border-t-2 border-[#3d4449] bg-[#2e3337] text-center font-bold text-white">
          <span>#</span>
          <span className="col-span-2">제목</span>
          <span>작성자</span>
        </div>
        {notices.map((n) => (
          <div key={n.id} className="grid h-[98px] grid-cols-4 items-center border-b-2 border-[#d9dbe2] text-center text-[#212529] last:border-transparent">
            <span>{n.id}</span>
            <a className="col-span-2 text-[#444]">{n.title}</a>
            <span>{n.author}</span>
          </div>
        ))}
      </div>
      <button className="ml-auto mt-[30px] h-[76px] w-[136px] rounded-lg bg-[#1a75fb] pb-[3px] font-['Noto_Sans_CJK_KR'] text-[30px] leading-none text-white">글쓰기</button>
    </section>
  );
}

function Caret() {
  return <svg width="20" height="10" viewBox="0 0 20 10" className="-ml-px -mt-1"><path d="M0 0h20L10 9.500z" fill="#212529" /></svg>;
}

function AddressCard() {
  return (
    <section className={`h-[368px] ${cardClass}`}>
      <CardHead title="주소 입력" icon={<BiMap className="size-16" />} />
      <div className="mt-6 flex justify-center gap-2 font-['Open_Sans','Noto_Sans_CJK_KR'] text-[30.300px] leading-none text-[#212529]">
        <button className="flex h-[76px] w-[114px] items-center justify-center rounded-lg bg-[#f8b93a]">서울<Caret /></button>
        <button className="flex h-[76px] w-[188px] items-center justify-center rounded-lg bg-[#f8b93a]">e편한세상<Caret /></button>
        <button className="h-[76px] w-[162px] rounded-lg border-2 border-[#5c656e] text-[#444]">상세보기</button>
      </div>
    </section>
  );
}

const articles = [
  "KB국민은행, 주택담보·전세대출 변동금리 0.15%p 인상",
  "주택 공급 늘리는 신도시 개발이 집값 급등 부채질했나",
];

function NewsCard() {
  return (
    <section className={`h-[388px] ${cardClass}`}>
      <CardHead title="주택 관련 기사" icon={<BiNews className="size-16" />} />
      <ul className="mt-[26px] font-['Open_Sans','Noto_Sans_CJK_KR'] text-[24.500px] text-[#444]">
        {articles.map((a) => (
          <li key={a} className="flex h-12 items-center justify-center whitespace-nowrap">
            <span className="mr-[35px] size-3 rounded-full bg-[#444]" />
            {a}
          </li>
        ))}
      </ul>
    </section>
  );
}

function DesktopEdge() {
  return (
    <div className="flex h-[1882px] w-1.5 shrink-0 flex-col overflow-hidden border-l border-[#a2a2a2] bg-[#cfcfcf]">
      <div className="h-[27px] shrink-0 border-b-2 border-[#a9a9a9] bg-[#dcdcdc]" />
      <div className="h-[51px] shrink-0 border-b-2 border-[#8f97a8] bg-[#c4c4c4]" />
      <div className="mt-[824px] h-11 shrink-0 bg-[#b9c4d2]">
        <svg width="5" height="44"><path d="M0 15l5-9M0 23h5M3 23v13" stroke="#000" strokeWidth="4" /></svg>
      </div>
      <div className="mt-[316px] h-[15px] shrink-0 border-y-2 border-[#a5a5a5] bg-[#bfbfbf]" />
      <div className="mt-[7px] h-[19px] shrink-0 border-y-2 border-[#446fae] bg-[#cb5048]" />
      <div className="mt-[14px] h-[38px] shrink-0 border-y-2 border-[#ababab] bg-[#d6d6d6]" />
    </div>
  );
}

export default function App() {
  return (
    <div className="flex h-[1882px] w-[2640px] overflow-hidden bg-white">
      <div className="relative flex w-[2634px] shrink-0 flex-col">
        <TabStrip />
        <Toolbar />
        <BookmarkBar />
        <SiteHeader />
        <main className="px-[206px]">
          <p className="mt-[26px] pr-1 text-center font-['Open_Sans','Noto_Sans_CJK_KR'] text-[30.300px] leading-[48px] text-[#444]">
            아파트/다세대, 주택 별 거래정보와 아파트 정보를 조회할 수 있습니다.
          </p>
          <div className="mt-[60px] grid grid-cols-[1080px_1080px] gap-x-[60px]">
            <div className="flex flex-col gap-[42px]">
              <KakaoMap />
              <AddressCard />
            </div>
            <div className="flex flex-col gap-12">
              <NoticeCard />
              <NewsCard />
            </div>
          </div>
        </main>
        <button className="absolute bottom-[18px] right-[30px] flex size-20 items-center justify-center rounded-full bg-[#505050]">
          <svg width="30" height="20" viewBox="0 0 30 20" className="-mt-1"><path d="M3 16.500L15 4.500L27 16.500" fill="none" stroke="#fff" strokeWidth="5.500" /></svg>
        </button>
      </div>
      <DesktopEdge />
    </div>
  );
}
